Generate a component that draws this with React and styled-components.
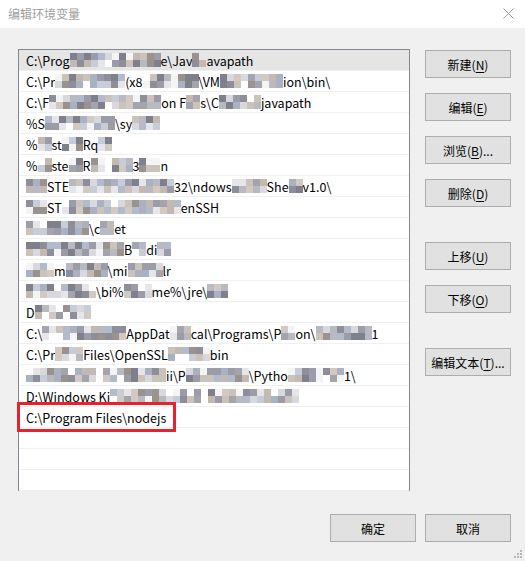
import React from 'react';
import styled, { createGlobalStyle } from 'styled-components';

const GlobalStyle = createGlobalStyle`
  html, body { margin: 0; padding: 0; background: #f0f0f0; }
  body { font-family: "Noto Sans CJK SC", "Noto Sans", sans-serif; }
`;

const Window = styled.div`
  width: 525px;
  height: 561px;
  display: flex;
  flex-direction: column;
  background: #f0f0f0;
  position: relative;
  overflow: hidden;
`;

const TitleBar = styled.div`
  height: 28px;
  flex: none;
  background: #ffffff;
  display: flex;
  align-items: center;
  justify-content: space-between;
  padding: 0 11px 2px 8px;
  box-sizing: border-box;
`;

const Title = styled.span`
  font-size: 12px;
  color: #a0a0a0;
`;

const Body = styled.div`
  flex: 1;
  display: flex;
  flex-direction: column;
  padding: 21px 14px 0 18px;
`;

const Main = styled.div`
  display: flex;
  gap: 15px;
`;

const ListBox = styled.div`
  width: 392px;
  height: 442px;
  box-sizing: border-box;
  border: 1px solid #828790;
  background: #ffffff;
`;

const Row = styled.div`
  position: relative;
  height: 21px;
  box-sizing: border-box;
  border-bottom: 1px solid #f0f0f0;
  background: ${({ $selected }) => ($selected ? '#e5e5e5' : '#ffffff')};
  display: flex;
  align-items: center;
  padding-left: 7px;
  font-size: 12.5px;
  color: #000000;
  white-space: nowrap;
`;

const Highlight = styled.div`
  position: absolute;
  z-index: 2;
  left: -2px;
  top: -5px;
  width: 159px;
  height: 30px;
  box-sizing: border-box;
  border: 3px solid #e8222c;
  pointer-events: none;
`;

const MosaicGrid = styled.span`
  display: inline-grid;
  grid-auto-flow: column;
  grid-template-rows: 7px 7px;
  grid-auto-columns: 7px;
  vertical-align: middle;
`;

const Cell = styled.span`
  background: ${({ $c }) => $c};
`;

const Side = styled.div`
  display: flex;
  flex-direction: column;
  padding-top: 1px;
  width: 86px;
`;

const Group = styled.div`
  display: flex;
  flex-direction: column;
  gap: 15px;
  margin-bottom: ${({ $gap }) => $gap}px;
`;

const Button = styled.button`
  width: 86px;
  height: 28px;
  box-sizing: border-box;
  border: 1px solid #adadad;
  background: #e1e1e1;
  font-family: "Noto Sans CJK SC", "Noto Sans", sans-serif;
  font-size: 12px;
  color: #000000;
  padding: 0;
  display: flex;
  align-items: center;
  justify-content: center;
  u { text-decoration: underline; text-underline-offset: 2px; }
`;

const Footer = styled.div`
  display: flex;
  justify-content: flex-end;
  gap: 9px;
  margin-top: 23px;
`;

const Grip = styled.svg`
  position: absolute;
  right: 2px;
  bottom: 2px;
`;

const palette = [
  '#b9b9c2', '#9c9ca8', '#cbc3b9', '#8e8e9a', '#d8d8de', '#a9b1c2',
  '#e6e6ea', '#80808c', '#c2bab2', '#b2bacb', '#f4f4f4', '#d2cac2',
  '#ffffff', '#a4a4ae', '#c6ccd8', '#9a928c',
];

let seed = 7;
const rnd = () => {
  seed = (seed * 9301 + 49297) % 233280;
  return seed / 233280;
};

const Mosaic = ({ w }) => {
  const cells = Math.max(2, Math.round(w / 7)) * 2;
  const colors = [];
  for (let i = 0; i < cells; i++) colors.push(palette[Math.floor(rnd() * palette.length)]);
  return (
    <MosaicGrid>
      {colors.map((c, i) => <Cell key={i} $c={c} />)}
    </MosaicGrid>
  );
};

const rows = [
  ['C:\\Prog', 89, 'e\\Jav', 8, 'avapath'],
  ['C:\\Pr', 70, ' (x8', 56, '\\VM', 63, 'ion\\bin\\'],
  ['C:\\F', 112, 'on F', 14, 's\\C', 42, 'javapath'],
  ['%S', 70, '\\sy', 28],
  ['%', 14, 'st', 21, 'Rq', 14],
  ['%', 7, 'ste', 14, 'R', 42, '3', 21, 'n'],
  [21, 'STE', 105, '32\\', 'ndows', 35, 'She', 7, 'v1.0\\'],
  [21, 'ST', 119, 'enSSH'],
  [63, '\\c', 14, 'et'],
  [98, 'B', 14, 'di', 14],
  [28, 'm', 42, '\\mi', 35, 'lr'],
  [70, '\\bi', '%', 28, 'me%\\jre\\', 21],
  ['D', 56],
  ['C:\\', 84, 'AppDat', 21, 'cal\\Programs\\P', 14, 'on\\', 56, '1'],
  ['C:\\Pr', 28, 'Files\\OpenSSL', 42, 'bin'],
  [140, 'ii\\P', 63, '\\Pytho', 56, '1\\'],
  ['D:\\Windows Ki', 189],
  ['C:\\Program Files\\nodejs'],
  [], [], [],
];

const Seg = ({ s }) => (typeof s === 'number' ? <Mosaic w={s} /> : <span>{s}</span>);

const sideTop = [
  ['新建', 'N', ''],
  ['编辑', 'E', ''],
  ['浏览', 'B', '...'],
  ['删除', 'D', ''],
];
const sideMid = [
  ['上移', 'U', ''],
  ['下移', 'O', ''],
];

const Label = ({ t }) => (
  <span>
    {t[0]}(<u>{t[1]}</u>){t[2]}
  </span>
);

export default function App() {
  return (
    <Window>
      <GlobalStyle />
      <TitleBar>
        <Title>编辑环境变量</Title>
        <svg width="11" height="11" viewBox="0 0 11 11">
          <path d="M0.5 0.5 L10.5 10.5 M10.5 0.5 L0.5 10.5" stroke="#9a9a9a" strokeWidth="1" fill="none" />
        </svg>
      </TitleBar>
      <Body>
        <Main>
          <ListBox>
            {rows.map((r, i) => (
              <Row key={i} $selected={i === 0}>
                {r.map((s, j) => <Seg key={j} s={s} />)}
                {i === 17 && <Highlight />}
              </Row>
            ))}
          </ListBox>
          <Side>
            <Group $gap={35}>
              {sideTop.map((t) => (
                <Button key={t[1]}><Label t={t} /></Button>
              ))}
            </Group>
            <Group $gap={35}>
              {sideMid.map((t) => (
                <Button key={t[1]}><Label t={t} /></Button>
              ))}
            </Group>
            <Button><Label t={['编辑文本', 'T', '...']} /></Button>
          </Side>
        </Main>
        <Footer>
          <Button>确定</Button>
          <Button>取消</Button>
        </Footer>
      </Body>
      <Grip width="10" height="10" viewBox="0 0 10 10">
        <g fill="#b8b8b8">
          <rect x="7" y="1" width="2" height="2" />
          <rect x="4" y="4" width="2" height="2" />
          <rect x="7" y="4" width="2" height="2" />
          <rect x="1" y="7" width="2" height="2" />
          <rect x="4" y="7" width="2" height="2" />
          <rect x="7" y="7" width="2" height="2" />
        </g>
      </Grip>
    </Window>
  );
}
